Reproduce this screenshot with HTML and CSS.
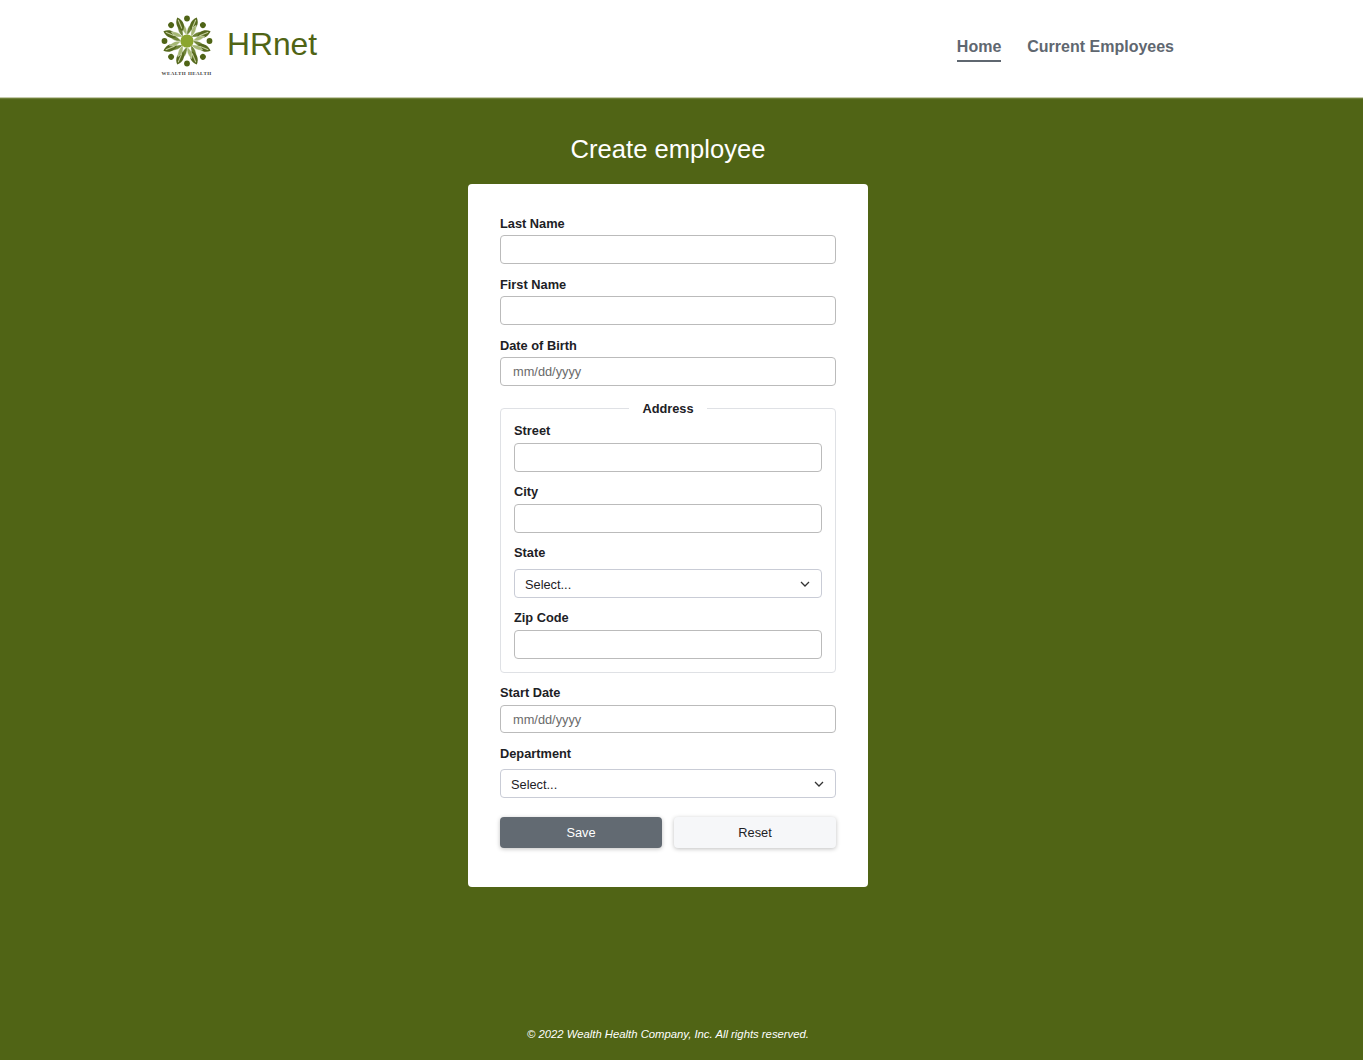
FILE: index.html
```html
<!DOCTYPE html>
<html lang="en">
<head>
<meta charset="utf-8">
<title>HRnet</title>
<link rel="stylesheet" href="styles.css">
</head>
<body>
<header class="site-header">
  <a class="brand" href="#">
    <span class="logo">
      <svg class="logo-mark" viewBox="-27 -27 54 54" width="54" height="54" aria-hidden="true">
        <defs>
          <g id="petal">
            <circle cx="0" cy="-22.5" r="2.9" fill="#4f6416"/>
            <path d="M0 -6 C-4 -8.5 -6 -12.5 -4.6 -17.5 C-1.2 -15 0.5 -10.5 0 -6Z" fill="#a6b774" stroke="#fff" stroke-width=".4"/>
            <path d="M0 -6 C4 -8.5 6 -12.5 4.6 -17.5 C1.2 -15 -0.5 -10.5 0 -6Z" fill="#6f8436" stroke="#fff" stroke-width=".4"/>
            <g transform="rotate(22.5)">
              <path d="M0 -11 C-4.6 -14.5 -4.6 -21 0 -25.5 C4.6 -21 4.6 -14.5 0 -11Z" fill="#56691e"/>
              <path d="M0 -13.5 L0 -23" stroke="#c6d19d" stroke-width="1"/>
            </g>
          </g>
        </defs>
        <use href="#petal"/>
        <use href="#petal" transform="rotate(45)"/>
        <use href="#petal" transform="rotate(90)"/>
        <use href="#petal" transform="rotate(135)"/>
        <use href="#petal" transform="rotate(180)"/>
        <use href="#petal" transform="rotate(225)"/>
        <use href="#petal" transform="rotate(270)"/>
        <use href="#petal" transform="rotate(315)"/>
        <circle cx="0" cy="0" r="6.6" fill="#8ba52f"/>
      </svg>
      <span class="logo-caption">WEALTH HEALTH</span>
    </span>
    <span class="brand-name">HRnet</span>
  </a>
  <nav class="nav">
    <a class="nav-link is-active" href="#">Home</a>
    <a class="nav-link" href="#">Current Employees</a>
  </nav>
</header>

<main class="main">
  <h1 class="title">Create employee</h1>
  <form class="card">
    <div class="field">
      <label class="label">Last Name</label>
      <input class="input" type="text">
    </div>
    <div class="field">
      <label class="label">First Name</label>
      <input class="input" type="text">
    </div>
    <div class="field">
      <label class="label">Date of Birth</label>
      <input class="input input-date" type="text" placeholder="mm/dd/yyyy">
    </div>

    <fieldset class="address">
      <legend class="legend">Address</legend>
      <div class="field">
        <label class="label label-wide">Street</label>
        <input class="input" type="text">
      </div>
      <div class="field">
        <label class="label label-wide">City</label>
        <input class="input" type="text">
      </div>
      <div class="field">
        <label class="label label-select">State</label>
        <div class="select">
          <span>Select...</span>
          <svg class="chevron" viewBox="0 0 12 12" width="12" height="12" aria-hidden="true"><path d="M2 4 L6 8 L10 4" fill="none" stroke="#333" stroke-width="1.3"/></svg>
        </div>
      </div>
      <div class="field field-last">
        <label class="label label-wide">Zip Code</label>
        <input class="input" type="text">
      </div>
    </fieldset>

    <div class="field">
      <label class="label label-wide">Start Date</label>
      <input class="input input-date input-short" type="text" placeholder="mm/dd/yyyy">
    </div>
    <div class="field">
      <label class="label label-dept">Department</label>
      <div class="select">
        <span>Select...</span>
        <svg class="chevron" viewBox="0 0 12 12" width="12" height="12" aria-hidden="true"><path d="M2 4 L6 8 L10 4" fill="none" stroke="#333" stroke-width="1.3"/></svg>
      </div>
    </div>

    <div class="actions">
      <button class="btn btn-primary" type="button">Save</button>
      <button class="btn btn-light" type="button">Reset</button>
    </div>
  </form>
</main>

<footer class="footer">© 2022 Wealth Health Company, Inc. All rights reserved.</footer>
</body>
</html>
```
FILE: styles.css
```css
* { box-sizing: border-box; }

html, body { height: 100%; }

body {
  margin: 0;
  min-height: 1060px;
  background: #506415;
  color: #1d2125;
  font-family: "Liberation Sans", Arial, sans-serif;
  font-size: 12.8px;
  display: flex;
  flex-direction: column;
  overflow: hidden;
}

.site-header {
  height: 97px;
  background: #fff;
  box-shadow: 0 1px 0 #c6cbad, 0 2px 1px #6d7f38;
  padding: 14px 189px 0 160px;
  display: flex;
  justify-content: space-between;
  align-items: flex-start;
}

.brand {
  display: flex;
  align-items: flex-start;
  gap: 14px;
  text-decoration: none;
}

.logo {
  width: 53px;
  display: flex;
  flex-direction: column;
  align-items: center;
}

.logo-mark { display: block; }

.logo-caption {
  font-family: "Liberation Serif", serif;
  font-weight: 700;
  font-size: 5px;
  line-height: 6px;
  letter-spacing: .45px;
  white-space: nowrap;
  color: #444;
  margin-top: 3px;
}

.brand-name {
  color: #506415;
  font-size: 31.8px;
  line-height: 37px;
  margin-top: 12px;
}

.nav {
  display: flex;
  gap: 26px;
  margin-top: 23px;
}

.nav-link {
  color: #5f6770;
  font-size: 16px;
  font-weight: 700;
  line-height: 19px;
  padding-bottom: 4px;
  text-decoration: none;
  border-bottom: 2px solid transparent;
}

.nav-link.is-active { border-bottom-color: #5f6770; }

.main {
  width: 1336px;
  display: flex;
  flex-direction: column;
  align-items: center;
  flex: 1;
}

.title {
  margin: 37px 0 19px;
  color: #fff;
  font-size: 25.6px;
  font-weight: 400;
  line-height: 31px;
}

.card {
  width: 400px;
  height: 703px;
  background: #fff;
  border-radius: 4px;
  padding: 32px 32px 0;
}

.field { margin-bottom: 13px; }

.address .field { margin-bottom: 12px; }

.address .field-last { margin-bottom: 0; }

.label {
  display: block;
  font-size: 12.8px;
  font-weight: 700;
  line-height: 15px;
  margin-bottom: 4px;
}

.label-wide { margin-bottom: 5px; }

.label-select { margin-bottom: 9px; }

.label-dept { margin-bottom: 8px; }

.input {
  display: block;
  width: 100%;
  height: 29px;
  border: 1px solid #bbb;
  border-radius: 4px;
  background: #fff;
  padding: 0 12px;
  font: 12.8px "Liberation Sans", Arial, sans-serif;
  color: #1d2125;
}

.input-short { height: 28px; }

.input-date::placeholder { color: #6b6b6b; opacity: 1; }

.address {
  margin: 15px 0 12px;
  padding: 7px 13px 13px;
  min-width: 0;
  border: 1px solid #dfe1e5;
  border-radius: 4px;
}

.legend {
  margin: 0 auto;
  padding: 0 13px;
  font-size: 12.8px;
  font-weight: 700;
  line-height: 15px;
}

.select {
  height: 29px;
  border: 1px solid #c9ccd6;
  border-radius: 4px;
  background: #fff;
  padding: 1px 10px 0;
  display: flex;
  align-items: center;
  justify-content: space-between;
  font-size: 12.8px;
}

.actions {
  display: flex;
  gap: 12px;
  margin-top: 19px;
}

.btn {
  flex: 1;
  height: 31px;
  border: 0;
  border-radius: 4px;
  font: 12.8px "Liberation Sans", Arial, sans-serif;
  box-shadow: 0 1px 4px rgba(0, 0, 0, .25);
}

.btn-primary { background: #626a72; color: #fff; font-weight: 400; }

.btn-light { background: #f6f7f9; color: #1d2125; }

.footer {
  width: 1336px;
  height: 32px;
  color: #fff;
  font-size: 11.3px;
  font-style: italic;
  text-align: center;
  line-height: 13px;
}
```
